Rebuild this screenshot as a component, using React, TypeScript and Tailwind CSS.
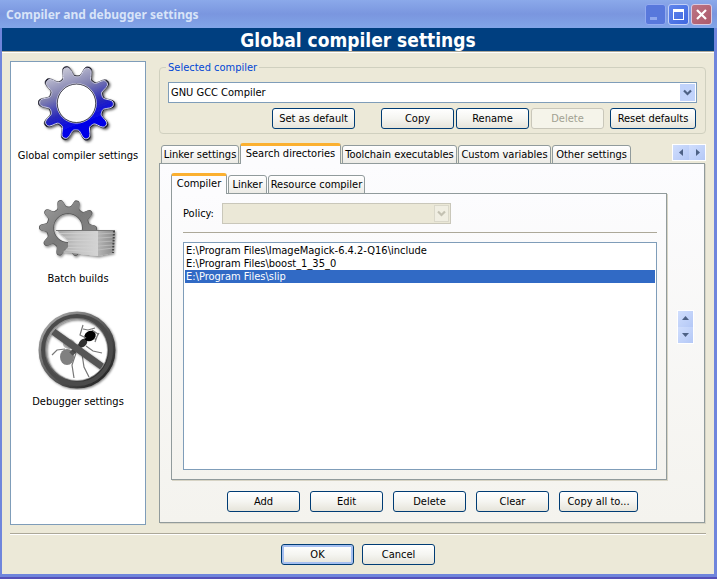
import React, { useState } from 'react';

const gearPath = (cx: number, cy: number, inner: number, outer: number) => {
    const points: string[] = [];
    const middle = (inner + outer) / 2;
    const depth = (outer - inner) / 2;

    for (let deg = 0; deg < 360; deg += 2) {
        const angle = (deg * Math.PI) / 180;
        const r = middle + depth * Math.tanh(1.8 * Math.cos(10 * (angle - 0.02)) - 0.4);
        points.push(`${(cx + r * Math.cos(angle)).toFixed(2)} ${(cy + r * Math.sin(angle)).toFixed(2)}`);
    }

    return `M${points.join('L')}Z`;
};

const ring = (cx: number, cy: number, r: number) =>
    `M${cx - r} ${cy}a${r} ${r} 0 1 0 ${2 * r} 0a${r} ${r} 0 1 0 ${-2 * r} 0Z`;

const GearIcon = () => (
    <svg className="size-20" viewBox="0 0 80 80" aria-hidden="true">
        <defs>
            <linearGradient id="gearBlue" x1="0.2" y1="0" x2="0.6" y2="1">
                <stop offset="0" stopColor="#d4d4dc" />
                <stop offset="0.35" stopColor="#8080b0" />
                <stop offset="0.6" stopColor="#2a2ab8" />
                <stop offset="0.8" stopColor="#0606e8" />
            </linearGradient>
            <filter id="gearShadow" x="-10%" y="-10%" width="130%" height="130%">
                <feDropShadow dx="1.5" dy="1.5" stdDeviation="1.2" floodOpacity="0.6" />
            </filter>
        </defs>
        <g filter="url(#gearShadow)" fillRule="evenodd">
            <path d={gearPath(38.5, 39.3, 27.5, 39)} fill="#151525" stroke="#151525" strokeWidth="0.5" />
            <path
                d={gearPath(38.5, 39.3, 26.5, 37.5) + ring(38.5, 39.3, 19.8)}
                fill="url(#gearBlue)"
                stroke="#d0d0e4"
                strokeWidth="1"
            />
            <circle cx="38.500" cy="39.300" r="19.200" fill="#fff" stroke="#303040" strokeWidth="0.8" />
        </g>
    </svg>
);

const BatchIcon = () => (
    <svg className="size-20" viewBox="0 0 80 80" aria-hidden="true">
        <defs>
            <linearGradient id="gearGray" x1="0" y1="0" x2="1" y2="1">
                <stop offset="0" stopColor="#a0a0a0" />
                <stop offset="0.5" stopColor="#7a7a7a" />
                <stop offset="1" stopColor="#8c8c8c" />
            </linearGradient>
            <linearGradient id="paperFront" x1="0" y1="0" x2="1" y2="0">
                <stop offset="0" stopColor="#a4a4a4" />
                <stop offset="0.5" stopColor="#c4c4c4" />
                <stop offset="1" stopColor="#d4d4d4" />
            </linearGradient>
            <linearGradient id="paperSide" x1="0" y1="0" x2="1" y2="0">
                <stop offset="0" stopColor="#b4b4b4" />
                <stop offset="1" stopColor="#8a8a8a" />
            </linearGradient>
            <filter id="batchShadow" x="-10%" y="-10%" width="130%" height="130%">
                <feDropShadow dx="1" dy="1.5" stdDeviation="1.2" floodOpacity="0.45" />
            </filter>
        </defs>
        <g filter="url(#batchShadow)">
            <g fillRule="evenodd">
                <path d={gearPath(30, 41, 21.5, 29.5) + ring(30, 41, 14)} fill="#555" />
                <path d={gearPath(30, 41, 20.7, 28.7) + ring(30, 41, 14.7)} fill="url(#gearGray)" />
            </g>
            <path d="M18 43H60V69L25 65L30 60V53Z" fill="url(#paperFront)" />
            <path d="M60 43H77L75 66L60 69Z" fill="url(#paperSide)" />
            <path
                d="M22 46.5H60M26 50H60M30 53.500H60M30 57H60M30 60.500L60 61M28 63L60 65"
                stroke="#d2d2d2"
                strokeWidth="0.7"
                fill="none"
            />
            <path
                d="M60 47L76 46M60 51L76 50M60 55L76 54M60 59L75 58M60 63L75 61"
                stroke="#c4c4c4"
                strokeWidth="0.7"
                fill="none"
            />
            <path d="M76 44L75 66" stroke="#444" strokeWidth="2" strokeDasharray="1.500 1.500" />
            <path d="M18 43.500H77" stroke="#777" strokeWidth="1" />
        </g>
    </svg>
);

const DebuggerIcon = () => (
    <svg className="size-20" viewBox="0 0 80 80" aria-hidden="true">
        <defs>
            <linearGradient id="ringEdge" x1="0" y1="0" x2="1" y2="1">
                <stop offset="0" stopColor="#b0b0b0" />
                <stop offset="0.4" stopColor="#6a6a6a" />
                <stop offset="1" stopColor="#1c1c1c" />
            </linearGradient>
            <filter id="antBlur">
                <feGaussianBlur stdDeviation="0.7" />
            </filter>
            <filter id="ringBlur">
                <feGaussianBlur stdDeviation="0.7" />
            </filter>
            <filter id="ringShadow" x="-10%" y="-10%" width="130%" height="130%">
                <feDropShadow dx="1" dy="1" stdDeviation="1" floodOpacity="0.5" />
            </filter>
        </defs>
        <circle cx="39" cy="40" r="33" fill="#fff" />
        <g filter="url(#antBlur)">
            <ellipse cx="31" cy="34" rx="6" ry="5" fill="#b8b8b8" />
            <ellipse cx="29" cy="47" rx="7" ry="8" fill="#808080" />
            <path d="M33 44L46 32" stroke="#555" strokeWidth="5" />
            <ellipse cx="45" cy="33" rx="5" ry="3.500" fill="#333" transform="rotate(-45 45 33)" />
            <ellipse cx="52" cy="26" rx="6" ry="5" fill="#000" transform="rotate(-35 52 26)" />
            <g stroke="#777" strokeWidth="1.200" fill="none">
                <path d="M48 28L42 25L45 15M45 19L50 20L57 18" />
                <path d="M54 20L60 24L57 32M61 23L57 30" />
                <path d="M48 36L55 41L64 43" />
                <path d="M27 39L19 40L14 45" />
                <path d="M38 43L34 55L36 68" />
                <path d="M44 44L46 57L51 67" />
            </g>
        </g>
        <g filter="url(#ringShadow)" fill="none">
            <path d="M13 20L66 58" stroke="#555" strokeWidth="7" filter="url(#ringBlur)" />
            <circle cx="39" cy="40" r="34.500" stroke="url(#ringEdge)" strokeWidth="8" />
            <circle cx="39" cy="40" r="34" stroke="#4c4c4c" strokeWidth="4" filter="url(#ringBlur)" />
        </g>
        <circle cx="39" cy="40" r="30.500" stroke="#aaa" strokeWidth="1" fill="none" opacity="0.7" />
    </svg>
);

type Direction = 'left' | 'right' | 'up' | 'down';

const arrowPaths: Record<Direction, string> = {
    left: 'M6 1V8L2 4.500Z',
    right: 'M3 1V8L7 4.500Z',
    up: 'M1 6H8L4.500 2Z',
    down: 'M1 3H8L4.500 7Z',
};

const ArrowButton: React.FC<{ direction: Direction }> = ({ direction }) => (
    <button
        type="button"
        aria-label={`Scroll ${direction}`}
        className="flex flex-1 items-center justify-center bg-linear-to-br from-[#d0defd] to-[#b4c8f6]"
    >
        <svg className="size-[9px]" viewBox="0 0 9 9" aria-hidden="true">
            <path d={arrowPaths[direction]} fill="#4d6185" />
        </svg>
    </button>
);

interface PushButtonProps {
    label: string;
    width?: string;
    disabled?: boolean;
    primary?: boolean;
}

const PushButton: React.FC<PushButtonProps> = ({ label, width = 'w-[73px]', disabled, primary }) => {
    let look = 'border-[#003c74] bg-linear-to-b from-white via-[#f5f5f1] to-[#e6e4da] text-black';
    if (disabled) look = 'border-[#c9c7ba] bg-[#f5f4ea] text-[#a1a192]';
    if (primary) look += ' shadow-[inset_0_0_0_2px_#a5bff0]';

    return (
        <button
            type="button"
            disabled={disabled}
            className={`h-[21px] rounded-[3px] border whitespace-nowrap ${width} ${look}`}
        >
            {label}
        </button>
    );
};

interface TabStripProps {
    label: string;
    tabs: { name: string; width: string }[];
    active: string;
    onSelect: (name: string) => void;
}

const TabStrip: React.FC<TabStripProps> = ({ label, tabs, active, onSelect }) => (
    <div role="tablist" aria-label={label} className="relative z-10 -mb-px flex items-end gap-px">
        {tabs.map(({ name, width }) => (
            <button
                key={name}
                type="button"
                role="tab"
                aria-selected={name === active}
                onClick={() => onSelect(name)}
                className={`rounded-t-[3px] border border-[#919b9c] whitespace-nowrap ${width} ${
                    name === active
                        ? 'h-[21px] border-t-[3px] border-t-[#fbb030] border-b-0 bg-[#fcfcfe] pb-1'
                        : 'h-[19px] bg-linear-to-b from-white to-[#ecebe6]'
                }`}
            >
                {name}
            </button>
        ))}
    </div>
);

const Chevron = ({ color }: { color: string }) => (
    <svg className="h-[7px] w-[9px]" viewBox="0 0 9 7" aria-hidden="true">
        <path d="M1 1.500L4.500 5L8 1.500" fill="none" stroke={color} strokeWidth="2.200" />
    </svg>
);

const categories = [
    { name: 'Global compiler settings', Icon: GearIcon },
    { name: 'Batch builds', Icon: BatchIcon },
    { name: 'Debugger settings', Icon: DebuggerIcon },
];

const settingTabs = [
    { name: 'Linker settings', width: 'w-[78px]' },
    { name: 'Search directories', width: 'w-[101px]' },
    { name: 'Toolchain executables', width: 'w-[115px]' },
    { name: 'Custom variables', width: 'w-[93px]' },
    { name: 'Other settings', width: 'w-[79px]' },
];

const directoryTabs = [
    { name: 'Compiler', width: 'w-[56px]' },
    { name: 'Linker', width: 'w-[39px]' },
    { name: 'Resource compiler', width: 'w-[97px]' },
];

const directories = [
    'E:\\Program Files\\ImageMagick-6.4.2-Q16\\include',
    'E:\\Program Files\\boost_1_35_0',
    'E:\\Program Files\\slip',
];

const TitleBar = () => (
    <header className="flex h-7 shrink-0 items-center justify-between bg-linear-to-b from-[#8ba9ea] via-[#7a96df] to-[#82a5e8] pr-[5px] pl-1.5">
        <h1 className="pt-0.5 font-['Noto_Sans','Open_Sans',sans-serif] text-[12px] leading-5 font-bold text-[#d8e4f8]">
            Compiler and debugger settings
        </h1>
        <div className="flex gap-0.5">
            <button
                type="button"
                aria-label="Minimize"
                disabled
                className="size-[21px] rounded-[3px] border border-[#92aaf0] bg-[#5878dc]"
            >
                <svg viewBox="0 0 19 19" aria-hidden="true">
                    <path d="M4 12H11V15H4Z" fill="#8fa8ee" />
                </svg>
            </button>
            <button
                type="button"
                aria-label="Maximize"
                className="size-[21px] rounded-[3px] border border-[#c3d0f7] bg-linear-to-br from-[#6085ec] to-[#3f67e0]"
            >
                <svg viewBox="0 0 19 19" aria-hidden="true">
                    <path d="M4 4H15V15H4ZM5 7V14H14V7Z" fill="#fff" fillRule="evenodd" />
                </svg>
            </button>
            <button
                type="button"
                aria-label="Close"
                className="size-[21px] rounded-[3px] border border-[#d9c9e0] bg-linear-to-br from-[#bd7484] to-[#ac5a6c]"
            >
                <svg viewBox="0 0 19 19" aria-hidden="true">
                    <path d="M5 5L14 14M14 5L5 14" stroke="#fff" strokeWidth="2.200" />
                </svg>
            </button>
        </div>
    </header>
);

const App: React.FC = () => {
    const [settingTab, setSettingTab] = useState('Search directories');
    const [directoryTab, setDirectoryTab] = useState('Compiler');
    const [selected, setSelected] = useState(2);

    return (
        <div className="flex min-h-screen flex-col border-b-2 border-[#5550b8] bg-[#6f85dc] font-['DejaVu_Sans_Condensed','Roboto',sans-serif] text-[11px] leading-[13px] text-black">
            <TitleBar />
            <div className="mr-[3px] mb-[3px] ml-0.5 flex flex-1 flex-col bg-[#ece9d8]">
                <h2 className="h-[25px] border-b border-white bg-[#003f80] text-center text-[19px] leading-6 font-bold text-white shadow-[inset_0_-1px_#aca899]">
                    Global compiler settings
                </h2>

                <main className="flex flex-1 gap-[13px] px-2 pt-2">
                    <nav className="flex w-[136px] shrink-0 flex-col gap-[23px] border border-[#7f9db9] bg-white pt-0.5">
                        {categories.map(({ name, Icon }) => (
                            <button
                                key={name}
                                type="button"
                                className="flex h-[100px] flex-col items-center gap-[5px] whitespace-nowrap"
                            >
                                <Icon />
                                {name}
                            </button>
                        ))}
                    </nav>

                    <div className="flex min-w-0 flex-1 flex-col">
                        <fieldset className="rounded-[4px] border border-[#d0d0bf] px-2 pb-1">
                            <legend className="-ml-0.5 h-[13px] px-0.5 text-[#0046d5]">
                                <label htmlFor="compiler">Selected compiler</label>
                            </legend>
                            <div className="relative mt-2">
                                <select
                                    id="compiler"
                                    className="block h-[21px] w-full appearance-none border border-[#7f9db9] bg-white pl-0.5"
                                >
                                    <option>GNU GCC Compiler</option>
                                </select>
                                <span className="pointer-events-none absolute inset-y-0.5 right-0.5 flex w-[15px] items-center justify-center bg-[#c1d3fb]">
                                    <Chevron color="#4d6185" />
                                </span>
                            </div>
                            <div className="mt-[5px] mr-px flex justify-end">
                                <PushButton label="Set as default" width="w-[83px]" />
                                <div className="mr-1.5 ml-[26px] flex gap-0.5">
                                    <PushButton label="Copy" />
                                    <PushButton label="Rename" />
                                    <PushButton label="Delete" disabled />
                                </div>
                                <PushButton label="Reset defaults" width="w-[86px]" />
                            </div>
                        </fieldset>

                        <div className="mt-[9px] flex items-end justify-between pl-0.5">
                            <TabStrip label="Settings" tabs={settingTabs} active={settingTab} onSelect={setSettingTab} />
                            <div className="mb-0.5 flex h-[17px] w-[34px] border border-white">
                                <ArrowButton direction="left" />
                                <ArrowButton direction="right" />
                            </div>
                        </div>

                        <section
                            aria-label={settingTab}
                            className="mr-px mb-0.5 flex flex-1 flex-col border border-[#919b9c] bg-linear-to-b from-[#fcfcfe] to-[#f4f3ee] pt-[9px] pr-2.5 pb-2.5 pl-[11px] shadow-[1px_1px_#d7d4c5]"
                        >
                            <div className="flex flex-1 items-center gap-2.5">
                                <div className="flex flex-1 flex-col self-stretch">
                                    <TabStrip
                                        label="Directories"
                                        tabs={directoryTabs}
                                        active={directoryTab}
                                        onSelect={setDirectoryTab}
                                    />
                                    <div className="flex flex-1 flex-col border border-[#919b9c] bg-linear-to-b from-[#fcfcfe] to-[#f4f3ee] pt-[9px] pr-[9px] pb-[9px] pl-[11px] shadow-[1px_1px_#d7d4c5]">
                                        <div className="flex items-center gap-[9px]">
                                            <label htmlFor="policy" className="w-[30px]">
                                                Policy:
                                            </label>
                                            <div className="relative w-[229px]">
                                                <select
                                                    id="policy"
                                                    disabled
                                                    className="block h-[21px] w-full appearance-none border border-[#c9c7ba] bg-[#ebe8d7]"
                                                />
                                                <span className="pointer-events-none absolute inset-y-0.5 right-0.5 flex w-[15px] items-center justify-center border border-[#dad8ca] bg-[#f0eee2]">
                                                    <Chevron color="#c3c1b2" />
                                                </span>
                                            </div>
                                        </div>
                                        <hr className="mt-2 mb-[9px] border-[#aca899]" />
                                        <ul
                                            role="listbox"
                                            aria-label="Search directories"
                                            className="flex-1 border border-[#7f9db9] bg-white px-px pt-px"
                                        >
                                            {directories.map((path, index) => (
                                                <li
                                                    key={path}
                                                    role="option"
                                                    aria-selected={index === selected}
                                                    onClick={() => setSelected(index)}
                                                    className={`px-px ${index === selected ? 'bg-[#316ac5] text-white' : ''}`}
                                                >
                                                    {path}
                                                </li>
                                            ))}
                                        </ul>
                                    </div>
                                </div>
                                <div className="flex h-[34px] w-[17px] flex-col border border-white">
                                    <ArrowButton direction="up" />
                                    <ArrowButton direction="down" />
                                </div>
                            </div>
                            <div className="mt-[11px] flex justify-center gap-2.5">
                                <PushButton label="Add" />
                                <PushButton label="Edit" />
                                <PushButton label="Delete" />
                                <PushButton label="Clear" />
                                <PushButton label="Copy all to..." width="w-[79px]" />
                            </div>
                        </section>
                    </div>
                </main>

                <footer className="mx-2 mt-2 flex justify-center gap-2 border-t border-[#aca899] pt-2.5 pb-[9px] shadow-[inset_0_1px_#ffffff]">
                    <PushButton label="OK" primary />
                    <PushButton label="Cancel" />
                </footer>
            </div>
        </div>
    );
};

export default App;
